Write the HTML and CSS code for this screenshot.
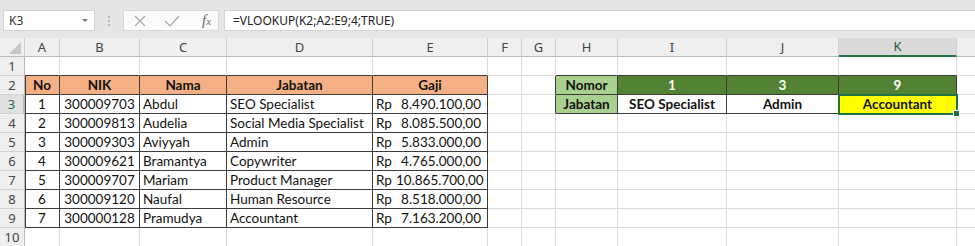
FILE: index.html
```html
<!DOCTYPE html>
<html lang="id">
<head>
    <meta charset="UTF-8">
    <title>VLOOKUP Jabatan</title>
    <link rel="stylesheet" href="styles.css">
</head>
<body>
    <div class="toolbar">
        <div class="namebox">
            <span>K3</span>
            <span class="caret"></span>
        </div>
        <div class="grip"><i></i><i></i><i></i></div>
        <div class="fbtns">
            <svg class="ico" width="12" height="12" viewBox="0 0 12 12"><path d="M1 1L11 11M11 1L1 11" stroke="#a8a8a8" stroke-width="1.2" fill="none"/></svg>
            <svg class="ico" width="16" height="12" viewBox="0 0 16 12"><path d="M1 6L6 11L15 1" stroke="#a8a8a8" stroke-width="1.2" fill="none"/></svg>
            <span class="fx">f<small>x</small></span>
        </div>
        <div class="formula">=VLOOKUP(K2;A2:E9;4;TRUE)</div>
    </div>

    <table class="sheet">
        <colgroup>
            <col style="width:25px"><col style="width:35px"><col style="width:80px"><col style="width:87px">
            <col style="width:146px"><col style="width:115px"><col style="width:34px"><col style="width:34px">
            <col style="width:62px"><col style="width:109px"><col style="width:112px"><col style="width:118px">
            <col style="width:60px">
        </colgroup>
        <tr class="colhead">
            <th class="corner"><span class="tri"></span></th>
            <th>A</th><th>B</th><th>C</th><th>D</th><th>E</th><th>F</th><th>G</th>
            <th>H</th><th>I</th><th>J</th><th class="cur">K</th><th></th>
        </tr>
        <tr>
            <th class="rh">1</th>
            <td class="bb"></td><td class="bb"></td><td class="bb"></td><td class="bb"></td><td class="bb"></td>
            <td></td><td></td>
            <td class="bb"></td><td class="bb"></td><td class="bb"></td><td class="bb"></td><td></td>
        </tr>
        <tr>
            <th class="rh">2</th>
            <td class="hd bl">No</td><td class="hd">NIK</td><td class="hd">Nama</td><td class="hd">Jabatan</td><td class="hd">Gaji</td>
            <td></td><td class="br"></td>
            <td class="lg">Nomor</td><td class="dg">1</td><td class="dg">3</td><td class="dg">9</td><td></td>
        </tr>
        <tr>
            <th class="rh cur">3</th>
            <td class="dt bl c">1</td><td class="dt c">300009703</td><td class="dt">Abdul</td><td class="dt">SEO Specialist</td>
            <td class="dt"><div class="money"><span>Rp</span><span>8.490.100,00</span></div></td>
            <td></td><td class="br"></td>
            <td class="lg">Jabatan</td><td class="wt">SEO Specialist</td><td class="wt">Admin</td>
            <td class="wt yl"><span class="sel"><i></i></span>Accountant</td><td></td>
        </tr>
        <tr>
            <th class="rh">4</th>
            <td class="dt bl c">2</td><td class="dt c">300009813</td><td class="dt">Audelia</td><td class="dt">Social Media Specialist</td>
            <td class="dt"><div class="money"><span>Rp</span><span>8.085.500,00</span></div></td>
            <td></td><td></td><td></td><td></td><td></td><td></td><td></td>
        </tr>
        <tr>
            <th class="rh">5</th>
            <td class="dt bl c">3</td><td class="dt c">300009303</td><td class="dt">Aviyyah</td><td class="dt">Admin</td>
            <td class="dt"><div class="money"><span>Rp</span><span>5.833.000,00</span></div></td>
            <td></td><td></td><td></td><td></td><td></td><td></td><td></td>
        </tr>
        <tr>
            <th class="rh">6</th>
            <td class="dt bl c">4</td><td class="dt c">300009621</td><td class="dt">Bramantya</td><td class="dt">Copywriter</td>
            <td class="dt"><div class="money"><span>Rp</span><span>4.765.000,00</span></div></td>
            <td></td><td></td><td></td><td></td><td></td><td></td><td></td>
        </tr>
        <tr>
            <th class="rh">7</th>
            <td class="dt bl c">5</td><td class="dt c">300009707</td><td class="dt">Mariam</td><td class="dt">Product Manager</td>
            <td class="dt"><div class="money"><span>Rp</span><span>10.865.700,00</span></div></td>
            <td></td><td></td><td></td><td></td><td></td><td></td><td></td>
        </tr>
        <tr>
            <th class="rh">8</th>
            <td class="dt bl c">6</td><td class="dt c">300009120</td><td class="dt">Naufal</td><td class="dt">Human Resource</td>
            <td class="dt"><div class="money"><span>Rp</span><span>8.518.000,00</span></div></td>
            <td></td><td></td><td></td><td></td><td></td><td></td><td></td>
        </tr>
        <tr>
            <th class="rh">9</th>
            <td class="dt bl c">7</td><td class="dt c">300000128</td><td class="dt">Pramudya</td><td class="dt">Accountant</td>
            <td class="dt"><div class="money"><span>Rp</span><span>7.163.200,00</span></div></td>
            <td></td><td></td><td></td><td></td><td></td><td></td><td></td>
        </tr>
        <tr>
            <th class="rh">10</th>
            <td></td><td></td><td></td><td></td><td></td><td></td><td></td><td></td><td></td><td></td><td></td><td></td>
        </tr>
    </table>
</body>
</html>
```

FILE: styles.css
```css
body {
    margin: 0;
    width: 975px;
    height: 246px;
    overflow: hidden;
    background-color: #fff;
    font-family: "Noto Sans", sans-serif;
}

.toolbar {
    height: 38px;
    background-color: #e6e6e6;
    display: flex;
    align-items: flex-start;
    padding-top: 10px;
    box-sizing: border-box;
}

.namebox {
    width: 92px;
    height: 21px;
    margin-left: 3px;
    background-color: #fff;
    border: 1px solid #d4d4d4;
    box-sizing: border-box;
    display: flex;
    align-items: center;
    justify-content: space-between;
    padding: 0 6px 0 5px;
    font-size: 12px;
    color: #333;
}

.caret {
    width: 0;
    height: 0;
    border-left: 3px solid transparent;
    border-right: 3px solid transparent;
    border-top: 3px solid #777;
}

.grip {
    width: 28px;
    height: 21px;
    display: flex;
    flex-direction: column;
    align-items: center;
    justify-content: center;
    gap: 2px;
}

.grip i {
    width: 2px;
    height: 2px;
    background-color: #b4b4b4;
}

.fbtns {
    width: 96px;
    height: 21px;
    background-color: #fbfbfb;
    border: 1px solid #d8d8d8;
    box-sizing: border-box;
    display: flex;
    align-items: center;
    padding: 0 0 0 10px;
    gap: 18px;
}

.fx {
    font-family: "Liberation Serif", serif;
    font-style: italic;
    font-size: 15px;
    color: #666;
    margin-left: 4px;
}

.fx small {
    font-size: 11px;
}

.formula {
    flex: 1;
    height: 21px;
    margin-left: 5px;
    background-color: #fff;
    border: 1px solid #d4d4d4;
    border-right: none;
    box-sizing: border-box;
    padding-left: 8px;
    font-size: 12px;
    line-height: 19px;
    color: #222;
}

.sheet {
    border-collapse: separate;
    border-spacing: 0;
    table-layout: fixed;
    width: 1017px;
    font-family: Lato, sans-serif;
    font-size: 13.5px;
    color: #111;
}

.sheet tr {
    height: 19px;
}

.sheet td, .sheet th {
    padding: 0 3px;
    border-right: 1px solid #dcdcdc;
    border-bottom: 1px solid #dcdcdc;
    white-space: nowrap;
    overflow: hidden;
    line-height: 17px;
}

.colhead {
    height: 18px;
}

.colhead th {
    background-color: #efefef;
    border-right-color: #cfcfcf;
    border-bottom-color: #b9b9b9;
    font-family: "Noto Sans", sans-serif;
    font-weight: normal;
    font-size: 13px;
    color: #444;
}

.colhead th.cur {
    background-color: #dadada;
    color: #1f5c3a;
    border-bottom: 2px solid #217346;
}

.corner {
    position: relative;
}

.tri {
    position: absolute;
    right: 3px;
    bottom: 2px;
    width: 0;
    height: 0;
    border-left: 12px solid transparent;
    border-bottom: 12px solid #c6c6c6;
}

.rh {
    background-color: #efefef;
    border-right-color: #b9b9b9 !important;
    border-bottom-color: #d3d3d3 !important;
    font-family: "Noto Sans", sans-serif;
    font-weight: normal;
    font-size: 13px;
    color: #444;
    text-align: center;
}

.rh.cur {
    background-color: #e0e0e0;
    color: #217346;
    border-right: 2px solid #217346;
}

.c {
    text-align: center;
}

.bb {
    border-bottom-color: #3c3c3c !important;
}

.br {
    border-right-color: #3c3c3c !important;
}

.bl {
    box-shadow: inset 1px 0 0 #3c3c3c;
}

.hd, .dt {
    border-right-color: #3c3c3c !important;
    border-bottom-color: #3c3c3c !important;
}

.hd {
    background-color: #f4b084;
    font-weight: bold;
    text-align: center;
}

.money {
    display: flex;
    justify-content: space-between;
    gap: 4px;
    padding-right: 3px;
}

.lg, .dg, .wt {
    border-right-color: #3c3c3c !important;
    border-bottom-color: #3c3c3c !important;
    font-weight: bold;
    text-align: center;
}

.lg {
    background-color: #a9d08e;
}

.dg {
    background-color: #548235;
    color: #fff;
}

.yl {
    background-color: #ffff00;
    position: relative;
    overflow: visible !important;
}

.sel {
    position: absolute;
    left: -1px;
    top: -1px;
    right: -2px;
    bottom: -2px;
    border: 2px solid #217346;
}

.sel i {
    position: absolute;
    right: -4px;
    bottom: -4px;
    width: 5px;
    height: 5px;
    background-color: #217346;
    border: 1px solid #fff;
}
```
